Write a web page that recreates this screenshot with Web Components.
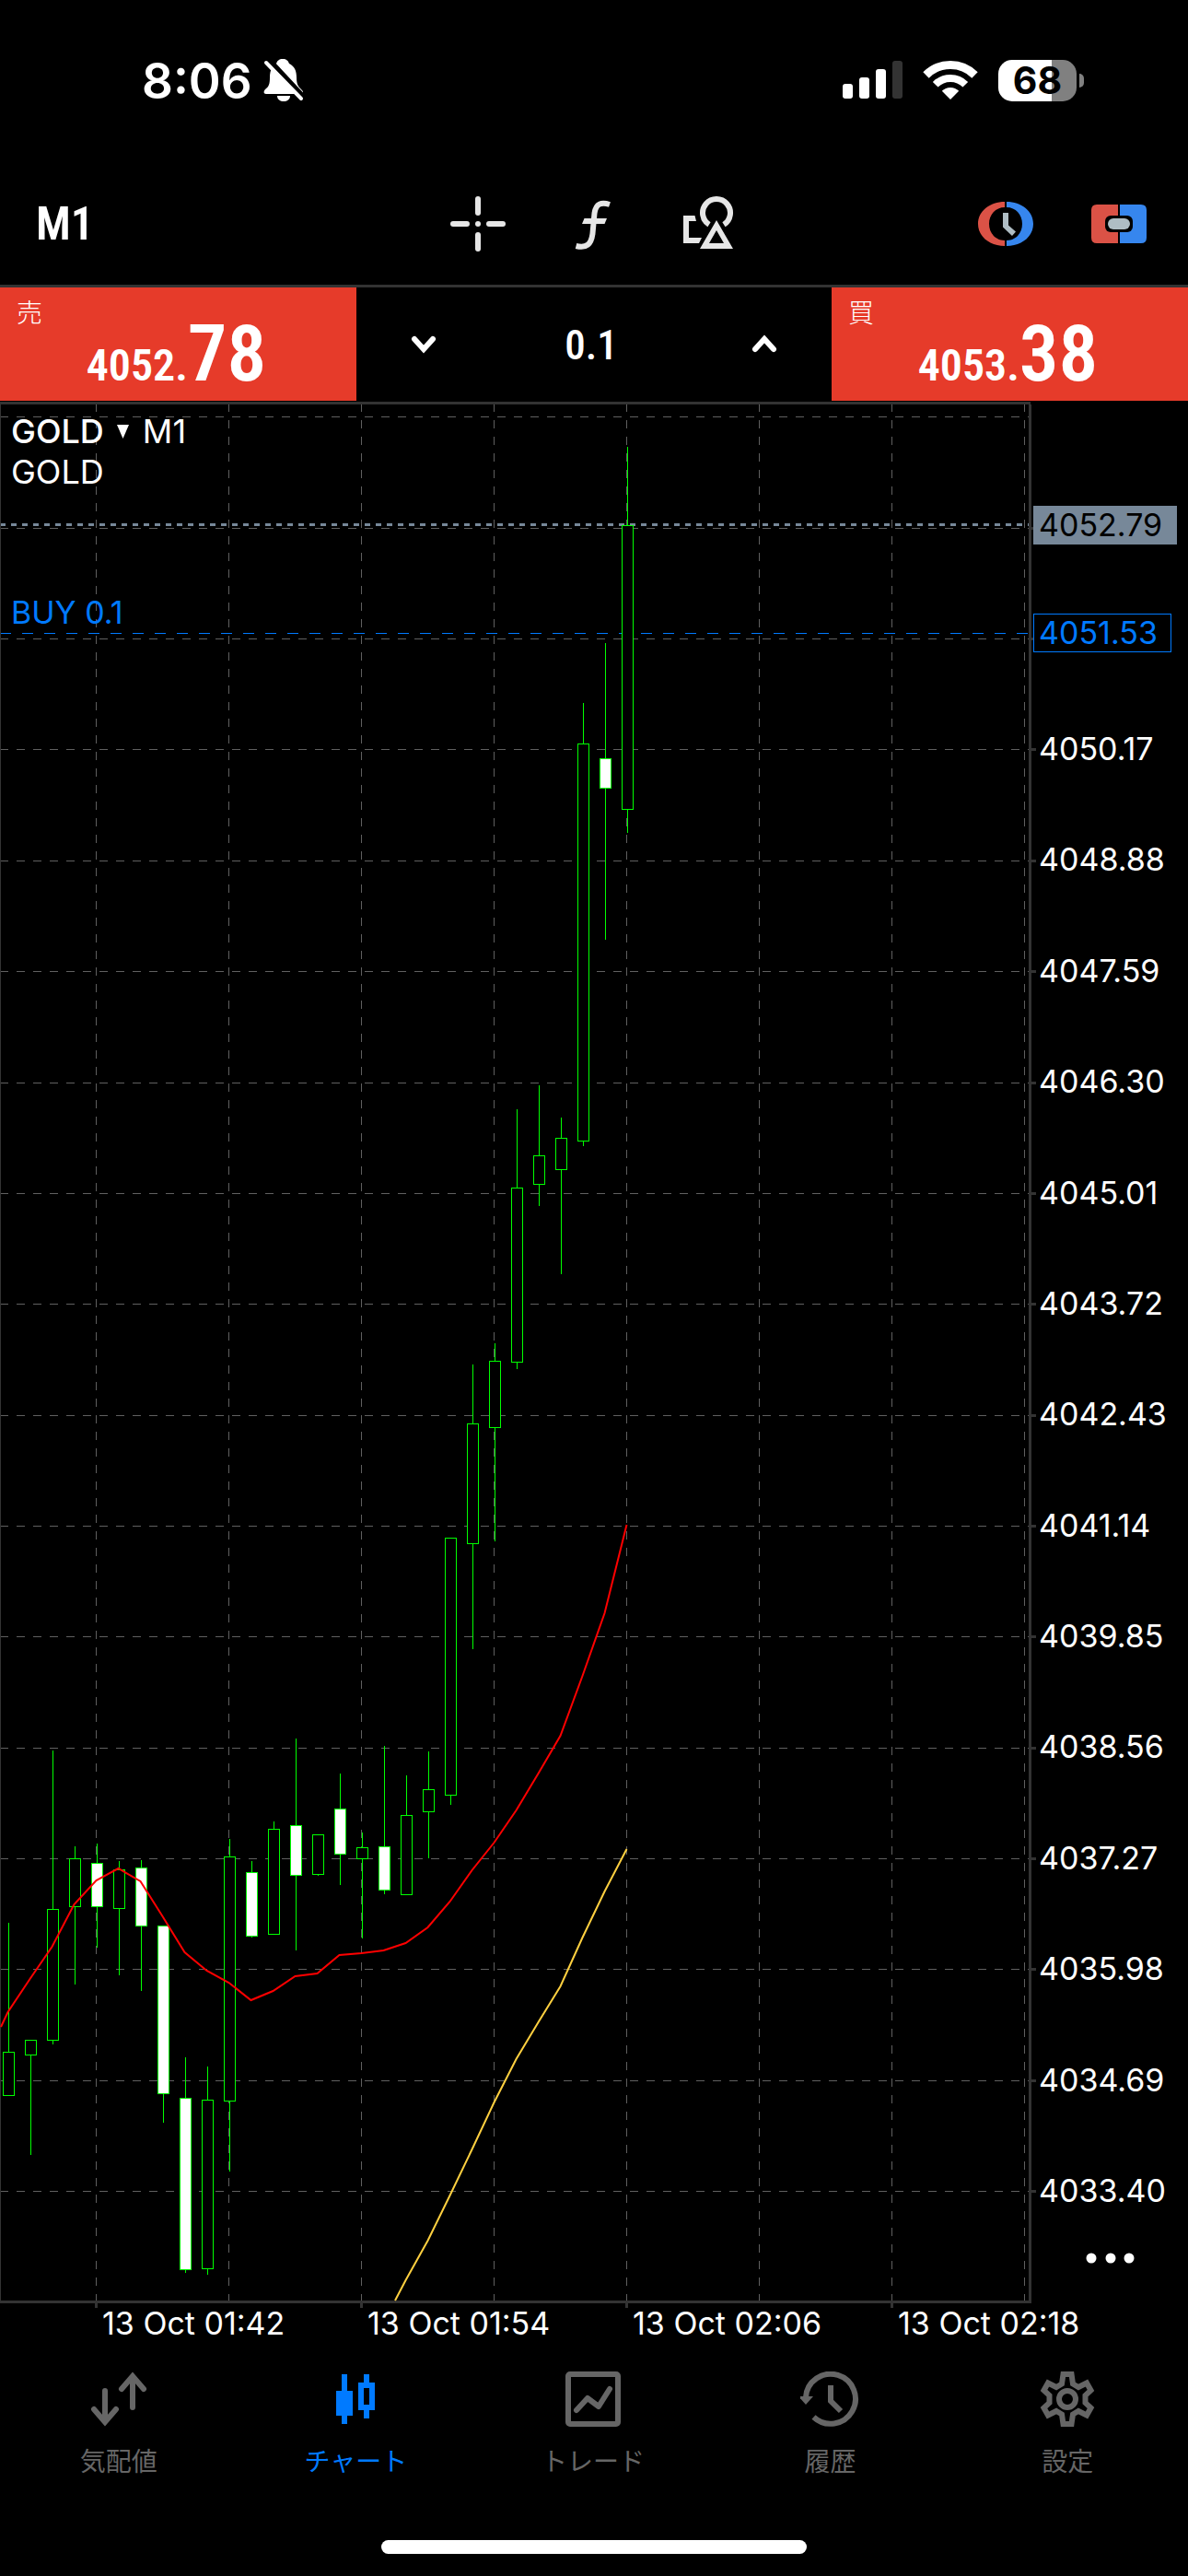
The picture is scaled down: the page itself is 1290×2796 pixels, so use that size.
<!DOCTYPE html>
<html lang="ja">
<head>
<meta charset="utf-8">
<meta name="viewport" content="width=device-width, initial-scale=1">
<title>GOLD M1</title>
<style>
  html, body { margin: 0; background: #000; }
  body {
    color: #fff;
    font-family: Inter, "Noto Sans CJK JP", sans-serif;
    --ui: #e6e6e6;
    --line: #333;
    --muted: #666;
    --accent: #007aff;
    --sell: #e63b2a;
    --condensed: "Roboto Condensed", "Liberation Sans Narrow", Roboto, sans-serif;
  }
</style>
</head>
<body>
<trade-app></trade-app>
<script>
  const define = (name, html, setup) => {
    const template = document.createElement('template');
    template.innerHTML = html;
    customElements.define(name, class extends HTMLElement {
      connectedCallback() {
        if (this.shadowRoot) return;
        this.attachShadow({ mode: 'open' }).append(template.content.cloneNode(true));
        if (setup) setup(this.shadowRoot, this);
      }
    });
  };

  define('status-bar', `
    <style>
      :host { display: flex; justify-content: space-between; align-items: flex-start; height: 177px; padding: 57px 113px 0 154px; box-sizing: border-box; }
      .side { display: flex; align-items: center; height: 60px; }
      time { font-size: 53px; line-height: 60px; font-weight: 600; padding-top: 2px; }
      .bell { margin-left: 12px; }
      .wifi { margin: 0 22px; }
      svg { display: block; }
      .battery { display: flex; align-items: center; gap: 3px; }
      .cell { width: 85px; height: 45px; border-radius: 15px; background: linear-gradient(90deg, #fff 68%, #808080 68%); color: #000; font-size: 41px; line-height: 45px; font-weight: 700; text-align: center; }
      .nub { width: 5px; height: 15px; border-radius: 0 5px 5px 0; background: #808080; }
    </style>
    <div class="side">
      <time>8:06</time>
      <svg class="bell" width="44" height="48" viewBox="0 0 44 48" fill="#fff" aria-hidden="true">
        <path d="M21 1c4 0 6 2 7 5 6 3 8 8 8 15 0 8 2 10 6 14 2 2 1 4-1 4H3c-3 0-3-3-1-5 4-3 5-6 5-13C7 13 10 8 14 6c1-3 3-5 7-5z"/>
        <path d="M15 41h14c0 8-14 8-14 0z"/>
        <path d="M5 1 45 44" stroke="#000" stroke-width="6"/>
        <path d="M3 5 41 44" stroke="#fff" stroke-width="4" stroke-linecap="round"/>
      </svg>
    </div>
    <div class="side">
      <svg width="65" height="42" viewBox="0 0 65 42" fill="#fff" aria-hidden="true">
        <rect y="25" width="11" height="16" rx="3"/><rect x="18" y="18" width="11" height="23" rx="3"/>
        <rect x="36" y="9" width="11" height="32" rx="3"/><rect x="54" width="11" height="41" rx="3" fill="#333"/>
      </svg>
      <svg class="wifi" width="60" height="44" viewBox="0 0 60 44" fill="none" stroke="#fff" aria-hidden="true">
        <path d="M3.500 16.500a37.500 37.500 0 0 1 53 0" stroke-width="9"/>
        <path d="M13.700 26.700a23 23 0 0 1 32.600 0" stroke-width="8"/>
        <path d="M30 43 20.800 33.800a13 13 0 0 1 18.400 0z" fill="#fff" stroke="none"/>
      </svg>
      <div class="battery"><div class="cell">68</div><div class="nub"></div></div>
    </div>`);

  define('chart-toolbar', `
    <style>
      :host { display: grid; grid-template-columns: 1fr auto 1fr; align-items: center; height: 135px; padding: 0 45px 0 39px; box-sizing: border-box; border-bottom: 3px solid var(--line); }
      button { display: block; padding: 0; border: 0; background: none; color: inherit; font: 600 50px/60px var(--condensed); text-align: left; }
      svg { display: block; width: 60px; height: 60px; fill: var(--ui); }
      .tools { display: flex; gap: 66px; padding-left: 6px; }
      .right { display: flex; gap: 63px; justify-content: flex-end; }
    </style>
    <button aria-label="時間足">M1</button>
    <div class="tools">
      <button aria-label="十字線"><svg viewBox="489 213 60 60"><rect x="516" y="213" width="6" height="21" rx="3"/><rect x="516" y="252" width="6" height="21" rx="3"/><rect x="489" y="240" width="21" height="6" rx="3"/><rect x="528" y="240" width="21" height="6" rx="3"/><circle cx="519" cy="243" r="3"/></svg></button>
      <button aria-label="インディケータ"><svg viewBox="615 213 60 60"><path d="M662 222c-9-3-15-1-16.500 9.500l-2 22C642 265 637 270 625.500 267" fill="none" stroke="#e6e6e6" stroke-width="6"/><path d="M634.500 237H659l-2.500 6H632z"/></svg></button>
      <button aria-label="オブジェクト"><svg viewBox="741 213 60 60"><path d="M742 234h12.500l1.500 6h-8v18h14l-3 6h-17z"/><path d="M770 243.700a15 15 0 1 1 16 0" fill="none" stroke="#e6e6e6" stroke-width="6"/><path fill-rule="evenodd" d="M778 239l18 31h-36zM778 250l-8 14h16z"/></svg></button>
    </div>
    <div class="right">
      <button aria-label="取引時間"><svg viewBox="1062 213 60 60"><path fill="#db5246" d="M1091 219c-16 0-29 10-29 24s13 24 29 24v-6c-10 0-17-8-17-18s7-18 17-18z"/><path fill="#3686ee" d="M1093 219c16 0 29 10 29 24s-13 24-29 24v-6c10 0 17-8 17-18s-7-18-17-18z"/><path fill="#afbdc4" d="M1089 231h6v13.500l8 7-4 4.500-10-9.500z"/></svg></button>
      <button aria-label="ワンクリック取引"><svg viewBox="1185 213 60 60"><path fill="#db5246" d="M1191 222h23v42h-23q-6 0-6-6v-30q0-6 6-6z"/><path fill="#3686ee" d="M1216 222h23q6 0 6 6v30q0 6-6 6h-23z"/><rect x="1200" y="234" width="30" height="18" rx="6" fill="#000"/><rect x="1203" y="237" width="24" height="12" rx="6" fill="#afbdc4"/></svg></button>
    </div>`);

  define('price-quote', `
    <style>
      :host { display: block; flex: 0 0 30%; }
      button { display: flex; flex-direction: column; align-items: stretch; width: 100%; height: 123px; padding: 11px 0 0; border: 0; background: var(--sell); color: #fff; }
      .side { padding-left: 18px; text-align: left; font: 300 28px/30px "Noto Sans CJK JP", sans-serif; }
      .price { display: flex; justify-content: center; align-items: baseline; padding-right: 4px; font: 600 48px/62px var(--condensed); }
      .price b { font-size: 85px; font-weight: 600; }
    </style>
    <button><span class="side"><slot></slot></span><span class="price"><span class="whole"></span><b class="pips"></b></span></button>`,
    (root, host) => {
      root.querySelector('.whole').textContent = host.getAttribute('whole');
      root.querySelector('.pips').textContent = host.getAttribute('pips');
    });

  define('quote-bar', `
    <style>
      :host { display: flex; height: 124px; }
      .lot { flex: 1; min-width: 0; display: flex; align-items: center; justify-content: space-between; padding: 0 52px; }
      button { padding: 6px; border: 0; background: none; }
      svg { display: block; width: 30px; height: 24px; fill: none; stroke: #fff; stroke-width: 6; stroke-linecap: round; }
      input { width: 160px; padding: 2px 6px 0 0; border: 0; background: none; color: #fff; text-align: center; font: 500 45px/54px var(--condensed); }
    </style>
    <price-quote whole="4052." pips="78">売</price-quote>
    <div class="lot">
      <button aria-label="減らす"><svg viewBox="0 0 30 24"><path d="M5 6l10 11L25 6"/></svg></button>
      <input aria-label="ロット" value="0.1" inputmode="decimal">
      <button aria-label="増やす"><svg viewBox="0 0 30 24"><path d="M5 17L15 6l10 11"/></svg></button>
    </div>
    <price-quote whole="4053." pips="38">買</price-quote>`);

  // high, body top, body bottom, low, bearish flag; one row per minute
  const candles = [
    [2087,2227,2274,2274],[2214,2214,2230,2338],[1900,2072,2214,2218],[2004,2017,2069,2153],
    [2001,2022,2069,2113,1],[2020,2029,2071,2143],[2019,2027,2090,2160,1],[2090,2090,2272,2303,1],
    [2233,2277,2463,2466,1],[2243,2279,2462,2468],[1996,2015,2280,2356],[2020,2032,2101,2102,1],
    [1977,1985,2099,2099],[1887,1981,2035,2116,1],[1991,1991,2034,2035],[1925,1963,2012,2045,1],
    [1989,2005,2017,2103],[1895,2004,2051,2055,1],[1927,1970,2056,2056],[1901,1942,1966,2016],
    [1669,1669,1948,1958],[1481,1545,1675,1789],[1458,1477,1549,1672],[1204,1289,1478,1485],
    [1178,1254,1285,1308],[1213,1235,1269,1382],[763,807,1238,1243],[698,823,855,1019,1],[485,570,878,903]
  ];
  const fast = [2184,2148,2113,2067,2041,2028,2042,2080,2119,2139,2152,2171,2161,2145,2142,2122,2120,2117,2109,2092,2064,2030,2000,1965,1925,1884,1819,1751,1655];
  const slow = [2475,2432,2383,2333,2282,2235,2195,2156,2103,2053,2007];
  const rows = [452,573,693,813,934,1054,1175,1295,1415,1536,1656,1776,1897,2017,2137,2258,2378];
  const columns = [104,248,392,536,680,824,968,1112];

  define('price-chart', `
    <style>
      :host { display: block; font-size: 34px; line-height: 42px; }
      .body { display: flex; }
      .plot { flex: 1; min-width: 0; position: relative; }
      svg { display: block; width: 100%; }
      .canvas { overflow: visible; }
      .head { position: absolute; left: 12px; top: 10px; font: 400 36px/44px Inter, sans-serif; }
      .symbol { display: flex; align-items: center; gap: 15px; }
      .symbol button { display: flex; align-items: center; gap: 14px; padding: 0; border: 0; background: none; color: #fff; font: inherit; font-weight: 500; }
      .symbol svg { width: 13px; height: 15px; fill: #fff; }
      .order { position: absolute; left: 12px; top: 208px; color: var(--accent); }
      .axis { width: 170px; box-sizing: border-box; display: flex; flex-direction: column; align-items: flex-start; padding: 113px 0 23px 2px; }
      .axis span { box-sizing: border-box; padding-left: 6px; }
      .now { width: 156px; background: #789; color: #000; }
      .entry { width: 150px; margin: 75px 0 84px; color: var(--accent); box-shadow: inset 0 0 0 1px var(--accent); }
      .scale { display: flex; flex-direction: column; justify-content: space-between; height: 1607px; }
      .more { margin: 42px 0 0 50px; padding: 4px; border: 0; background: none; }
      .more svg { width: 60px; height: 12px; fill: #fff; }
      .dates { display: flex; padding-left: 111px; margin-top: -5px; white-space: nowrap; }
      .dates span { flex: 0 0 288px; }
    </style>
    <div class="body">
      <div class="plot">
        <svg class="canvas" viewBox="0 436 1120 2070" role="img" aria-label="GOLD M1"></svg>
        <div class="head">
          <div class="symbol"><button>GOLD<svg viewBox="0 0 13 15"><path d="M0 0h13L6.500 15z"/></svg></button><span>M1</span></div>
          <div>GOLD</div>
        </div>
        <div class="order">BUY 0.1</div>
      </div>
      <div class="axis">
        <span class="now">4052.79</span>
        <span class="entry">4051.53</span>
        <div class="scale"></div>
        <button class="more" aria-label="その他"><svg viewBox="0 0 60 12"><circle cx="9" cy="6" r="5.500"/><circle cx="30" cy="6" r="5.500"/><circle cx="50" cy="6" r="5.500"/></svg></button>
      </div>
    </div>
    <div class="dates"><span>13 Oct 01:42</span><span>13 Oct 01:54</span><span>13 Oct 02:06</span><span>13 Oct 02:18</span></div>`,
    root => {
      let s = '<g shape-rendering="crispEdges" fill="none">';
      s += '<path stroke="#606060" stroke-dasharray="9 9" d="' + rows.map(y => `M0 ${y + .5}H1117`).join('') + '"/>';
      s += '<path stroke="#606060" stroke-dasharray="9 9" d="' + columns.map(x => `M${x + .5} 438V2497`).join('') + '"/>';
      s += '<path stroke="#789" stroke-width="3" stroke-dasharray="6 6" d="M0 569.5H1117"/>';
      s += '<path stroke="#007aff" stroke-dasharray="12 12" d="M0 687.5H1117"/>';
      candles.forEach(([high, top, bottom, low, bear], i) => {
        const x = 9.5 + 24 * i;
        s += `<path stroke="#0f0" d="M${x} ${high}V${top}M${x} ${bottom}V${low + 1}"/>`;
        s += `<rect x="${x - 6}" y="${top + .5}" width="12" height="${bottom - top}" stroke="#0f0" fill="${bear ? '#fff' : '#000'}"/>`;
      });
      s += '<path stroke="#333" d="M.5 439V2497"/>';
      s += '<path stroke="#333" stroke-width="3" d="M0 437.500H1119M0 2498.500H1120M1118.500 439V2500' +
        rows.slice(1).map((y, i) => `M1119 ${y + .5}H${i < 2 ? 1122 : 1125}`).join('') +
        [104, 392, 680, 968].map(x => `M${x + .5} 2500V2505`).join('') + '"/></g>';
      s += '<g fill="none" stroke-width="2"><path stroke="#f00" d="M1 2200L' + fast.map((y, i) => `${8.5 + 24 * i} ${y}`).join('L') + '"/>';
      s += '<path stroke="#ffd040" d="M429 2497L' + slow.map((y, i) => `${440.5 + 24 * i} ${y}`).join('L') + '"/></g>';
      root.querySelector('.canvas').innerHTML = s;
      const scale = root.querySelector('.scale');
      for (let i = 0; i < 14; i++) {
        const label = document.createElement('span');
        label.textContent = (4050.17 - 1.29 * i).toFixed(2);
        scale.append(label);
      }
    });

  define('tab-item', `
    <style>
      :host { display: block; flex: 1; color: var(--muted); }
      :host([active]) { color: var(--accent); }
      a { display: flex; flex-direction: column; align-items: center; gap: 15px; color: inherit; text-decoration: none; font: 400 28px/42px "Noto Sans CJK JP", sans-serif; }
      ::slotted(svg) { display: block; width: 66px; height: 60px; fill: none; stroke: currentColor; stroke-width: 6px; }
    </style>
    <a href="#"><slot name="icon"></slot><slot></slot></a>`);

  define('tab-bar', `
    <style>
      :host { display: flex; padding: 31px 2px 66px 0; }
    </style>
    <tab-item><svg slot="icon" viewBox="-33 -30 66 60" stroke-linecap="round"><path d="M-15-9V24M-27 11l12 14L-3 11M15 9V-24M3-11l12-14L27-11"/></svg>気配値</tab-item>
    <tab-item active><svg slot="icon" viewBox="-33 -30 66 60"><path fill="currentColor" stroke="none" fill-rule="evenodd" d="M-15-27h6v18h6v27h-6v9h-6v-9h-6v-27h6zM9-27h6v9h6v30h-6v9H9v-9H3v-30h6zM9-12v18h6v-18z"/></svg>チャート</tab-item>
    <tab-item><svg slot="icon" viewBox="-33 -30 66 60"><rect x="-27" y="-27" width="54" height="54" rx="2"/><path d="M-18 12L-6-1 6 8 18-11" stroke-linecap="round" stroke-linejoin="round"/></svg>トレード</tab-item>
    <tab-item><svg slot="icon" viewBox="-33 -30 66 60"><path d="M-27-2A27 27 0 1 1-18.500 19.500"/><path fill="currentColor" stroke="none" d="M-35-3h16l-8 9z"/><path d="M0-15V2L11 13"/></svg>履歴</tab-item>
    <tab-item><svg slot="icon" viewBox="-33 -30 66 60"><circle r="9"/><path d="M4.500-27L6-16.500 12-13 21-17.500 25.500-9.500 19.500-4V4L25.500 9.500 21 17.500 12 13 6 16.500 4.500 27H-4.500L-6 16.500-12 13-21 17.500-25.500 9.500-19.500 4V-4L-25.500-9.500-21-17.500-12-13-6-16.500-4.500-27z"/></svg>設定</tab-item>`);

  define('trade-app', `
    <style>
      :host { display: flex; flex-direction: column; min-height: 100vh; padding-bottom: 24px; box-sizing: border-box; background: #000; }
      .home { width: 462px; height: 15px; margin: 0 auto; border-radius: 8px; background: #fff; }
    </style>
    <status-bar></status-bar>
    <chart-toolbar></chart-toolbar>
    <quote-bar></quote-bar>
    <price-chart></price-chart>
    <tab-bar></tab-bar>
    <div class="home"></div>`);
</script>
</body>
</html>
